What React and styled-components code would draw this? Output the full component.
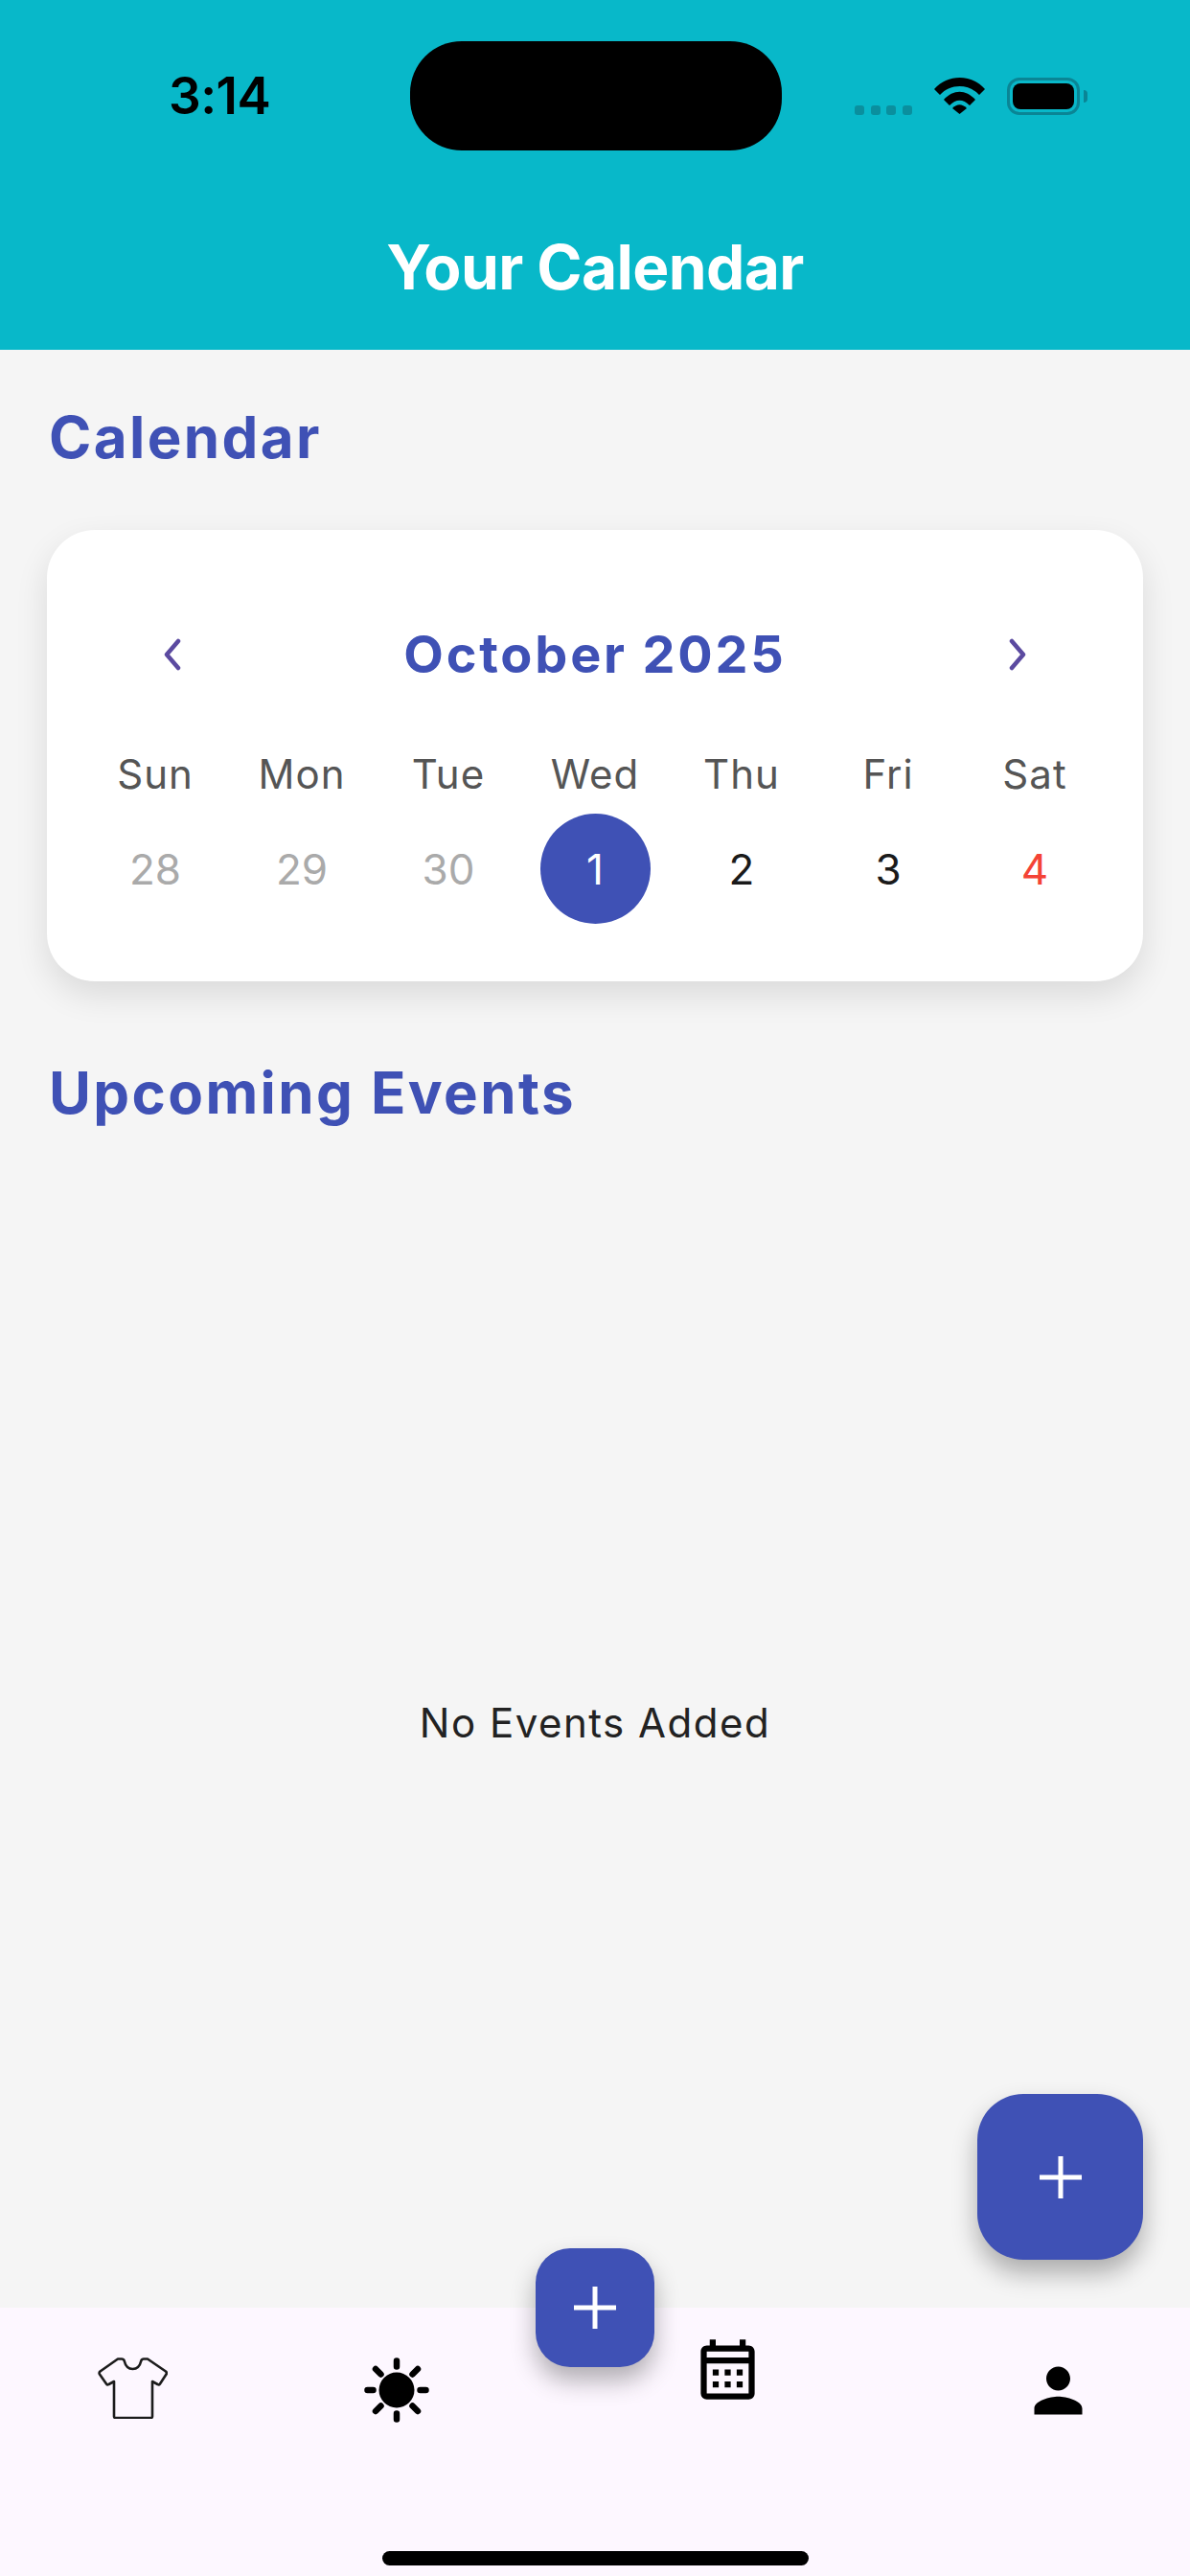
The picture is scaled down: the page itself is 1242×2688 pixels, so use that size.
import React from 'react';
import styled, { createGlobalStyle } from 'styled-components';

const Global = createGlobalStyle`
  html, body { margin: 0; padding: 0; background: #f5f5f5; }
  * { box-sizing: border-box; }
`;
const Page = styled.div`
  position: relative; width: 1242px; height: 2688px; display: flex; flex-direction: column;
  background: #f5f5f5; font-family: Inter, "Liberation Sans", sans-serif; overflow: hidden;
`;
const Header = styled.header`
  height: 365px; background: #08b8c9; display: flex; flex-direction: column; flex-shrink: 0;
`;
const StatusBar = styled.div`
  display: flex; align-items: center; padding-top: 43px; height: 157px;
`;
const TimeSlot = styled.div`
  width: 428px; padding-left: 176px; font-size: 53px; font-weight: 600; color: #000; line-height: 114px; letter-spacing: -0.5px;
`;
const Island = styled.div`
  width: 388px; height: 114px; border-radius: 54px; background: #000; flex-shrink: 0;
`;
const StatusIcons = styled.div`
  display: flex; align-items: center; padding-left: 76px; gap: 23px;
`;
const Signal = styled.div`
  display: flex; gap: 6.5px; align-self: flex-end;
`;
const SignalDot = styled.span`
  width: 10px; height: 10px; border-radius: 3px; background: #0a8f9e;
`;
const BatteryBody = styled.div`
  position: relative; width: 76px; height: 39px; border: 3px solid #0a8595; border-radius: 13px; padding: 3px;
  &::after {
    content: ''; position: absolute; right: -11px; top: 10px; width: 4px; height: 13px;
    background: #0a8595; border-radius: 0 4px 4px 0;
  }
`;
const BatteryFill = styled.div`
  width: 100%; height: 100%; background: #000; border-radius: 8px;
`;
const Title = styled.h1`
  margin: 66px 0 0; text-align: center; font-size: 64px; line-height: 112px; font-weight: 700; color: #fff; letter-spacing: -0.6px;
`;
const Main = styled.main`
  flex: 1; display: flex; flex-direction: column; padding: 0 49px;
`;
const SectionTitle = styled.h2`
  margin: ${p => p.$top}px 0 0 2px; font-size: 60px; line-height: 70px; font-weight: 700; color: #3f51b5; letter-spacing: 2.4px;
`;
const Card = styled.section`
  margin-top: 62px; height: 471px; background: #fff; border-radius: 50px; padding: 96px 37px 0;
  box-shadow: 0 14px 34px rgba(0, 0, 0, 0.11);
`;
const MonthRow = styled.div`
  display: flex; align-items: center; justify-content: space-between; height: 68px; padding: 0 81px;
`;
const MonthName = styled.div`
  font-size: 54px; font-weight: 700; color: #3f51b5; letter-spacing: 2.8px; line-height: 68px;
`;
const Chevron = styled.svg`
  width: 24px; height: 34px; fill: none; stroke: #5b4aa0; stroke-width: 4.5; stroke-linecap: round; stroke-linejoin: round;
`;
const Grid = styled.div`
  display: grid; grid-template-columns: repeat(7, 153px); justify-content: center;
`;
const WeekGrid = styled(Grid)`
  margin-top: 61px;
`;
const Weekday = styled.div`
  text-align: center; height: 60px; line-height: 60px; font-size: 42px; color: #555; letter-spacing: 1px;
`;
const DayGrid = styled(Grid)`
  margin-top: 11px;
`;
const Day = styled.div`
  display: flex; align-items: center; justify-content: center; height: 115px; font-size: 44px; color: ${p => p.$color};
`;
const Selected = styled.span`
  width: 115px; height: 115px; border-radius: 50%; background: #3f51b5; color: #fff;
  display: flex; align-items: center; justify-content: center;
`;
const Empty = styled.div`
  flex: 1; display: flex; align-items: center; justify-content: center; padding-top: 12px;
  font-size: 42px; color: #222; letter-spacing: 1.5px;
`;
const Nav = styled.nav`
  height: 280px; background: #fdf7ff; display: flex; flex-shrink: 0; align-items: flex-start;
`;
const Tab = styled.div`
  flex: ${p => p.$grow}; display: flex; justify-content: center; padding-top: ${p => p.$top}px;
`;
const Fab = styled.button`
  position: absolute; left: ${p => p.$x}px; top: ${p => p.$y}px; width: ${p => p.$size}px; height: ${p => p.$size}px;
  border: 0; padding: 0; border-radius: ${p => p.$radius}px; background: #3f51b5; color: #fff;
  display: flex; align-items: center; justify-content: center; box-shadow: 0 14px 26px rgba(0, 0, 0, 0.3);
`;
const HomeBar = styled.div`
  position: absolute; left: 399px; top: 2662px; width: 445px; height: 15px; border-radius: 8px; background: #000;
`;

const Plus = () => (
  <svg width="44" height="44" viewBox="0 0 44 44" fill="none" stroke="currentColor" strokeWidth="5">
    <path d="M22 0v44M0 22h44" />
  </svg>
);
const Wifi = () => (
  <svg width="53" height="38" viewBox="0 0 53 38" fill="#000">
    <path d="M0 12C14-4 39-4 53 12l-6 6C36 6 17 6 6 18Z" />
    <path d="M10 23C20 12 33 12 43 23l-6 6C30 22 23 22 16 29Z" />
    <path d="M19 32C24 27 29 27 34 32l-7.5 6Z" />
  </svg>
);
const Shirt = () => (
  <svg width="73" height="64" viewBox="0 0 73 64" fill="none" stroke="#1c1c1c" strokeWidth="2.6" strokeLinejoin="round" strokeLinecap="round">
    <path d="M21 1.5h4q2 0 2.700 2C29 9 32 12 36.500 12S44 9 45.300 3.500q.7-2 2.700-2h4L71 14.500q1.500 1.500.5 3L65 27.500q-1 1.500-2.500.5L57 25v36.500q0 1.500-1.500 1.500h-37Q17 63 17 61.500V25l-5.500 3q-1.500 1-2.500-.5L2 17.500q-1-1.500.5-3Z" />
  </svg>
);
const Sun = () => (
  <svg width="68" height="68" viewBox="0 0 68 68" stroke="#000" strokeWidth="6.500" strokeLinecap="round">
    <circle cx="34" cy="34" r="18.500" stroke="none" fill="#000" />
    <path d="M34 3.500v6M34 58.500v6M3.500 34h6M58.500 34h6M12 12l5.500 5.500M50.500 50.500L56 56M12 56l5.500-5.500M50.500 17.500L56 12" />
  </svg>
);
const CalendarIcon = () => (
  <svg width="75" height="75" viewBox="0 0 24 24" fill="#000">
    <path d="M19 4h-1V2h-2v2H8V2H6v2H5c-1.110 0-1.990.9-1.990 2L3 20a2 2 0 0 0 2 2h14c1.100 0 2-.9 2-2V6c0-1.100-.9-2-2-2zm0 16H5V10h14v10zm0-12H5V6h14v2zM9 14H7v-2h2v2zm4 0h-2v-2h2v2zm4 0h-2v-2h2v2zm-8 4H7v-2h2v2zm4 0h-2v-2h2v2zm4 0h-2v-2h2v2z" />
  </svg>
);
const PersonIcon = () => (
  <svg width="75" height="75" viewBox="0 0 24 24" fill="#000">
    <path d="M12 12c2.210 0 4-1.790 4-4s-1.790-4-4-4-4 1.790-4 4 1.790 4 4 4zm0 2c-2.670 0-8 1.340-8 4v2h16v-2c0-2.660-5.330-4-8-4z" />
  </svg>
);

const weekdays = ['Sun', 'Mon', 'Tue', 'Wed', 'Thu', 'Fri', 'Sat'];
const days = [
  { label: '28', color: '#aaaaaa' },
  { label: '29', color: '#aaaaaa' },
  { label: '30', color: '#aaaaaa' },
  { label: '1', selected: true, color: '#fff' },
  { label: '2', color: '#1a1a1a' },
  { label: '3', color: '#1a1a1a' },
  { label: '4', color: '#f44336' },
];

export default function App() {
  return (
    <Page>
      <Global />
      <Header>
        <StatusBar>
          <TimeSlot>3:14</TimeSlot>
          <Island />
          <StatusIcons>
            <Signal>{[0, 1, 2, 3].map(i => <SignalDot key={i} />)}</Signal>
            <Wifi />
            <BatteryBody><BatteryFill /></BatteryBody>
          </StatusIcons>
        </StatusBar>
        <Title>Your Calendar</Title>
      </Header>
      <Main>
        <SectionTitle $top={56}>Calendar</SectionTitle>
        <Card>
          <MonthRow>
            <Chevron viewBox="0 0 24 34"><path d="M19 3 7 17l12 14" /></Chevron>
            <MonthName>October 2025</MonthName>
            <Chevron viewBox="0 0 24 34"><path d="M5 3l12 14L5 31" /></Chevron>
          </MonthRow>
          <WeekGrid>{weekdays.map(d => <Weekday key={d}>{d}</Weekday>)}</WeekGrid>
          <DayGrid>
            {days.map(d => (
              <Day key={d.label} $color={d.color}>
                {d.selected ? <Selected>{d.label}</Selected> : d.label}
              </Day>
            ))}
          </DayGrid>
        </Card>
        <SectionTitle $top={81}>Upcoming Events</SectionTitle>
        <Empty>No Events Added</Empty>
      </Main>
      <Nav>
        <Tab $grow={2} $top={52}><Shirt /></Tab>
        <Tab $grow={2} $top={52}><Sun /></Tab>
        <Tab $grow={3} $top={27}><CalendarIcon /></Tab>
        <Tab $grow={2} $top={49}><PersonIcon /></Tab>
      </Nav>
      <Fab $x={1020} $y={2185} $size={173} $radius={48}><Plus /></Fab>
      <Fab $x={559} $y={2346} $size={124} $radius={36}><Plus /></Fab>
      <HomeBar />
    </Page>
  );
}
